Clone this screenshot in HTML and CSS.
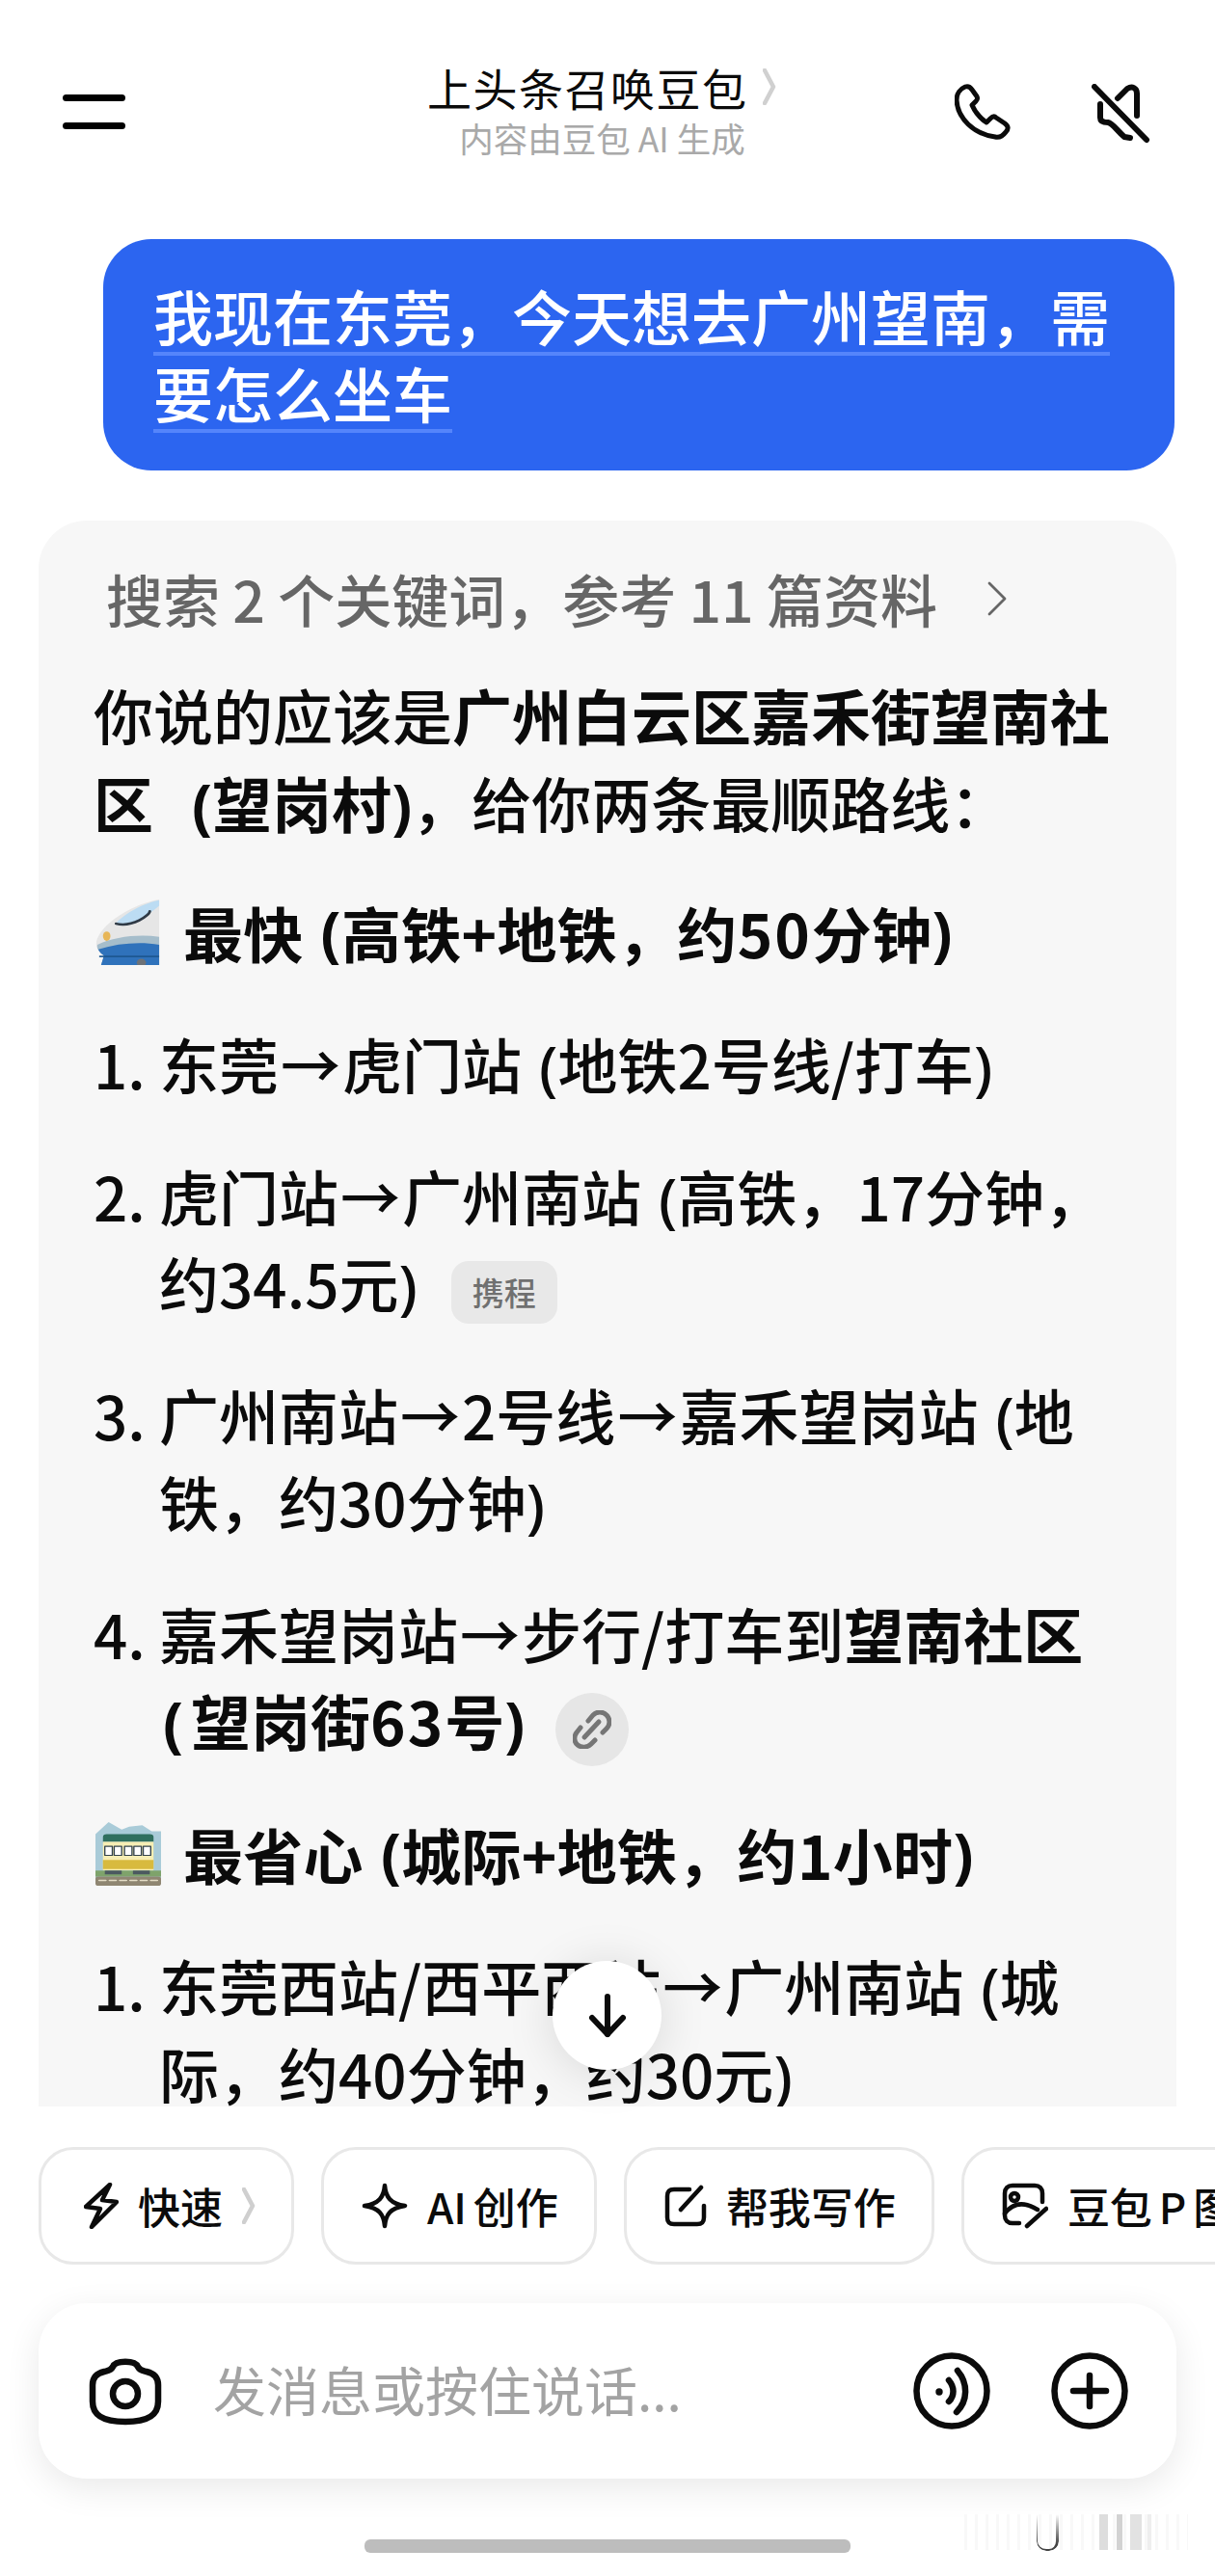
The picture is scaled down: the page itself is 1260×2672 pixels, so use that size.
FILE: index.html
```html
<!DOCTYPE html>
<html lang="zh-CN">

<head>
    <meta charset="UTF-8">
    <meta name="viewport" content="width=device-width, initial-scale=1.0">
    <title>上头条召唤豆包</title>
    <link rel="stylesheet" href="styles.css">
</head>

<body>

    <header class="top">
        <div class="menu"><span></span><span></span></div>
        <div class="title">
            <div class="title-main">上头条召唤豆包<svg class="title-arrow" viewBox="0 0 14 38"><path d="M2 2 L11 19 L2 36" /></svg></div>
            <div class="title-sub">内容由豆包 AI 生成</div>
        </div>
        <div class="top-icons">
            <svg class="ic-phone" viewBox="0 0 58 58"><path d="M11 3 C14 2 16 3 18 6 L23 13 C24 15 24 16 22 18 L18 22 C22 31 27 36 33 40 L37 36 C39 34 41 33 43 35 L52 41 C56 44 56 47 53 50 C50 54 46 56 42 55 C20 52 3 36 2 17 C2 10 6 5 11 3 Z" /></svg>
            <svg class="ic-mute" viewBox="0 0 62 62"><path d="M3 3 L57 58" /><path d="M27 15 L37 5 C42 2 47 4 47 10 V33" /><path d="M9 21 V35 Q9 40 17 40 C22 41 26 48 34 55 L40 56" /></svg>
        </div>
    </header>

    <div class="ask">
        <span class="ask-line">我现在东莞，今天想去广州望南，需</span>
        <span class="ask-line">要怎么坐车</span>
    </div>

    <main class="answer">
        <div class="search">搜索 2 个关键词，参考 11 篇资料<svg viewBox="0 0 20 36"><path d="M2 2 L18 18 L2 34" /></svg></div>

        <p class="intro">你说的应该是<b>广州白云区嘉禾街望南社<br>区 <i class="lp lp-intro">(</i>望岗村<i class="rp">)</i></b>，给你两条最顺路线：</p>

        <h2 class="route">
            <svg class="emoji" viewBox="0 0 70 84" preserveAspectRatio="none">
                <path d="M68 0 V84 H6 L10 70 C2 66 -1 58 2 50 C10 28 40 6 68 0 Z" fill="#e6e6e6" />
                <path d="M68 1 C48 6 30 20 22 30 C38 36 56 20 68 8 Z" fill="#bcdcf3" />
                <path d="M22 31 C40 36 58 20 58 15" fill="none" stroke="#2f3a46" stroke-width="3" />
                <path d="M2 58 C20 48 46 44 68 48 V84 H6 L10 70 C4 68 1 63 2 58 Z" fill="#a5bdcb" />
                <path d="M3 64 C24 56 48 54 68 58 V84 H6 L9 72 C6 70 4 67 3 64 Z" fill="#2f72bb" />
                <rect x="4" y="72" width="64" height="2" fill="#1c568f" />
                <circle cx="49" cy="81" r="5" fill="#6d7278" />
                <ellipse cx="12" cy="47" rx="4" ry="6" fill="#e7b658" />
            </svg>
            最快<i class="lp">(</i>高铁+地铁，约<span class="wide">50</span>分钟<i class="rp">)</i>
        </h2>

        <div class="step"><span class="num">1.</span><p>东莞<i class="to">→</i>虎门站<i class="lp">(</i>地铁2号线/打车<i class="rp">)</i></p></div>
        <div class="step"><span class="num">2.</span><p>虎门站<i class="to">→</i>广州南站<i class="lp">(</i>高铁，17分钟，<br>约34.5元<i class="rp">)</i><span class="tag">携程</span></p></div>
        <div class="step"><span class="num">3.</span><p>广州南站<i class="to">→</i>2号线<i class="to">→</i>嘉禾望岗站<i class="lp">(</i>地<br>铁，约30分钟<i class="rp">)</i></p></div>
        <div class="step"><span class="num">4.</span><p>嘉禾望岗站<i class="to">→</i>步行/打车到<b>望南社区<br><i class="lp lp-first">(</i>望岗街<span class="wide">63</span>号<i class="rp">)</i></b><span class="link"><svg viewBox="0 0 40 40"><path d="M16 11 L21 5 C25 1 31 1 35 5 C39 9 39 15 35 19 L31 23" /><path d="M8 18 L4 23 C1 27 1 33 5 36 C9 39 15 39 19 35 L23 31" /><path d="M12 28 L27 12" /></svg></span></p></div>

        <h2 class="route">
            <svg class="emoji emoji-b" viewBox="0 0 70 84" preserveAspectRatio="none">
                <path d="M0 16 L14 0 L28 10 L36 6 L50 4 L60 12 L70 12 V76 H0 Z" fill="#a9cbd8" />
                <path d="M8 20 Q8 16 12 16 H58 Q62 16 62 20 V26 H8 Z" fill="#2f6f5e" />
                <rect x="8" y="26" width="54" height="38" fill="#f6eeb4" />
                <rect x="8" y="50" width="54" height="12" fill="#d8ba3e" />
                <g fill="#fff" stroke="#33434d" stroke-width="1.4">
                    <rect x="10" y="32" width="8" height="12" />
                    <rect x="20" y="32" width="8" height="12" />
                    <rect x="31" y="32" width="8" height="12" />
                    <rect x="41" y="32" width="8" height="12" />
                    <rect x="51" y="32" width="8" height="12" />
                </g>
                <rect x="0" y="64" width="70" height="8" fill="#7ea36b" />
                <rect x="10" y="64" width="18" height="5" fill="#4c5a60" />
                <rect x="40" y="64" width="18" height="5" fill="#4c5a60" />
                <rect x="0" y="72" width="70" height="12" rx="3" fill="#8f8672" />
                <path d="M4 77 H66" stroke="#e4ddc6" stroke-width="2" stroke-dasharray="7 4" />
            </svg>
            最省心<i class="lp">(</i>城际+地铁，约1小时<i class="rp">)</i>
        </h2>

        <div class="step"><span class="num">1.</span><p>东莞西站/西平西站<i class="to">→</i>广州南站<i class="lp">(</i>城<br>际，约40分钟，约30元<i class="rp">)</i></p></div>
    </main>

    <button class="down"><svg viewBox="0 0 40 46"><path d="M20 3 V42" /><path d="M4 25 L20 42 L36 25" /></svg></button>

    <footer class="bottom">
        <div class="chips">
            <div class="chip">
                <svg class="ic-zap" viewBox="0 0 36 48"><path d="M27 2 L2 25 L17 27 L8 46 L34 20 L19 18 Z" /></svg>
                <span>快速</span>
                <svg class="chip-arrow" viewBox="0 0 14 38"><path d="M2 2 L11 19 L2 36" /></svg>
            </div>
            <div class="chip">
                <svg class="ic-star" viewBox="0 0 48 48"><path d="M24 3 C25 15 30 22 45 24 C30 26 25 33 24 45 C23 33 18 26 3 24 C18 22 23 15 24 3 Z" /></svg>
                <span class="chip-ai">AI 创作</span>
            </div>
            <div class="chip">
                <svg class="ic-edit" viewBox="0 0 44 44"><path d="M26 5 H10 C5 5 3 7 3 12 V34 C3 39 5 41 10 41 H34 C39 41 41 39 41 34 V22" /><path d="M17 26 L38 3" /></svg>
                <span>帮我写作</span>
            </div>
            <div class="chip">
                <svg class="ic-pic" viewBox="0 0 48 48"><path d="M18 42 H11 C6 42 3 39 3 34 V11 C3 6 6 3 11 3 H34 C39 3 42 6 42 11 V20" /><circle cx="13" cy="15" r="4" /><path d="M3 32 C12 20 24 20 37 28" /><path d="M26 45 L46 27" /></svg>
                <span class="chip-ai">豆包 P 图</span>
            </div>
        </div>

        <div class="inputbox">
            <svg class="ic-cam" viewBox="0 0 76 71"><path d="M25 10 C28 3 48 3 51 10 C53 14 56 14 60 15 C68 17 72 21 72 29 V46 C72 60 62 67 38 67 C14 67 4 60 4 46 V29 C4 21 8 17 16 15 C20 14 23 14 25 10 Z" /><circle cx="38" cy="38" r="13" /></svg>
            <span class="placeholder">发消息或按住说话...</span>
            <div class="input-right">
                <svg class="ic-round" viewBox="0 0 80 80"><circle cx="40" cy="40" r="36.5" /><path d="M46 19 C57 32 57 50 45 62" /><path d="M37 29 C43 36 43 45 37 51" /><circle class="dot" cx="27" cy="41" r="3.7" /></svg>
                <svg class="ic-round" viewBox="0 0 80 80"><circle cx="40" cy="40" r="36.5" /><path d="M40 24 V56" /><path d="M23 40 H57" /></svg>
            </div>
        </div>

        <div class="homebar"></div>
        <div class="mark"><span></span></div>
    </footer>

</body>

</html>
```

FILE: styles.css
```css
* {
    box-sizing: border-box;
}

html,
body {
    margin: 0;
    padding: 0;
}

body {
    position: relative;
    width: 1260px;
    height: 2672px;
    overflow: hidden;
    background: #fff;
    color: #0b0b0b;
    font-family: "Noto Sans CJK SC", "Noto Sans", sans-serif;
}

svg {
    fill: none;
    stroke: currentColor;
    stroke-linecap: round;
    stroke-linejoin: round;
    flex: none;
}

i {
    font-style: normal;
}

p {
    margin: 0;
}

/* header */
.top {
    display: flex;
    align-items: flex-start;
    height: 248px;
    padding: 63px 66px 0 65px;
}

.menu {
    display: flex;
    flex-direction: column;
    gap: 22px;
    width: 65px;
    margin-top: 35px;
}

.menu span {
    height: 7px;
    border-radius: 4px;
    background: #000;
}

.title {
    width: 363px;
    margin-left: 313px;
    text-align: center;
}

.title-main {
    display: flex;
    align-items: center;
    font-size: 46px;
    line-height: 54px;
    letter-spacing: 1.5px;
    white-space: nowrap;
}

.title-arrow {
    width: 14px;
    height: 38px;
    margin-left: 15px;
    stroke: #d0d0d0;
    stroke-width: 4.5;
}

.title-sub {
    margin-top: 5px;
    font-size: 35.5px;
    line-height: 42px;
    color: #a9a9a9;
    white-space: nowrap;
}

.top-icons {
    display: flex;
    gap: 84px;
    margin-left: auto;
    margin-top: 24px;
}

.ic-phone {
    width: 58px;
    height: 58px;
    stroke-width: 5;
}

.ic-mute {
    width: 62px;
    height: 62px;
    stroke-width: 6;
}

/* question */
.ask {
    width: 1111px;
    height: 240px;
    margin-left: 107px;
    padding: 44px 0 0 52px;
    border-radius: 50px;
    background: #2c65f0;
    color: #fff;
    font-size: 62px;
    font-weight: 500;
}

.ask-line {
    display: block;
    width: fit-content;
    height: 80px;
    line-height: 71px;
    background: linear-gradient(#5585fb, #5585fb) 0 73px / 100% 4px no-repeat;
}

/* answer card */
.answer {
    height: 1645px;
    margin: 52px 40px 0;
    padding: 46px 0 0 57px;
    overflow: hidden;
    border-radius: 50px 50px 0 0;
    background: #f7f7f7;
    font-size: 62px;
    font-weight: 500;
    line-height: 90.5px;
}

.search {
    display: flex;
    align-items: center;
    height: 70px;
    margin-left: 13px;
    font-size: 59px;
    color: #666;
}

.search svg {
    width: 20px;
    height: 36px;
    margin-left: 52px;
    stroke-width: 2.8;
    stroke: #666;
}

.intro {
    margin-top: 40px;
}

b,
.route {
    font-weight: 700;
}

.route {
    display: flex;
    align-items: center;
    height: 90px;
    margin: 45px 0 46px;
    font-size: 62px;
    line-height: 90px;
    letter-spacing: 0.3px;
    white-space: nowrap;
}

.emoji {
    width: 68px;
    height: 68px;
    margin: 0 23px 0 2px;
    stroke: none;
}

.emoji-b {
    height: 66px;
}

.step {
    display: flex;
    margin-bottom: 46px;
}

.num {
    width: 68px;
    flex: none;
}

.lp,
.rp {
    font-family: "Noto Sans", sans-serif;
    line-height: 1;
}

.lp {
    margin-left: 18px;
}

.lp-intro {
    margin-left: 26px;
}

.lp-first {
    margin: 0 8px 0 4px;
}

.wide {
    letter-spacing: 2px;
}

.to {
    margin: 0 2px;
}

.tag {
    display: inline-block;
    width: 110px;
    height: 65px;
    margin-left: 35px;
    border-radius: 18px;
    background: #e8e8e8;
    color: #707070;
    font-size: 33px;
    line-height: 65px;
    text-align: center;
    vertical-align: middle;
}

.link {
    display: inline-flex;
    align-items: center;
    justify-content: center;
    width: 76px;
    height: 76px;
    margin-left: 32px;
    border-radius: 50%;
    background: #e6e6e6;
    color: #757575;
    vertical-align: middle;
}

.link svg {
    width: 40px;
    height: 40px;
    stroke-width: 5;
}

/* scroll down button, sits over the text */
.down {
    position: absolute;
    left: 573px;
    top: 2034px;
    display: flex;
    align-items: center;
    justify-content: center;
    width: 113px;
    height: 113px;
    padding: 0;
    border: 0;
    border-radius: 50%;
    background: #fff;
    box-shadow: 0 4px 50px rgba(0, 0, 0, 0.13);
    color: #0b0b0b;
}

.down svg {
    width: 40px;
    height: 46px;
    stroke-width: 6;
}

/* bottom bar */
.bottom {
    height: 487px;
    padding-top: 42px;
    background: #fff;
}

.chips {
    display: flex;
    gap: 28px;
    padding-left: 40px;
    overflow: hidden;
    white-space: nowrap;
}

.chip {
    display: flex;
    align-items: center;
    flex: none;
    height: 122px;
    padding: 0 37px 0 39px;
    border: 3px solid #e8e8e8;
    border-radius: 36px;
    font-size: 44px;
    font-weight: 500;
}

.chip svg {
    margin-right: 20px;
    stroke-width: 4.5;
}

.ic-zap {
    width: 36px;
    height: 48px;
    margin-left: 5px;
}

.ic-star {
    width: 48px;
    height: 48px;
}

.ic-edit {
    width: 44px;
    height: 44px;
}

.ic-pic {
    width: 48px;
    height: 48px;
}

.chip-ai {
    word-spacing: -3px;
}

.chip svg.chip-arrow {
    width: 14px;
    height: 38px;
    margin: 0 0 0 20px;
    stroke: #cfcfcf;
    stroke-width: 4.5;
}

.inputbox {
    display: flex;
    align-items: center;
    width: 1180px;
    height: 182px;
    margin: 40px 0 0 40px;
    padding: 0 50px 0 52px;
    border-radius: 50px;
    background: #fff;
    box-shadow: 0 10px 36px rgba(0, 0, 0, 0.09);
}

.ic-cam {
    width: 76px;
    height: 71px;
    stroke-width: 6.5;
}

.placeholder {
    margin: 0 0 6px 53px;
    font-size: 55px;
    color: #a3a3a3;
}

.input-right {
    display: flex;
    gap: 63px;
    margin-left: auto;
}

.ic-round {
    width: 80px;
    height: 80px;
    stroke-width: 6.5;
}

.ic-round .dot {
    fill: currentColor;
    stroke: none;
}

.homebar {
    width: 504px;
    height: 14px;
    margin: 63px 0 0 378px;
    border-radius: 6px;
    background: #bdbdbd;
}

/* faint watermark bottom right */
.mark {
    position: absolute;
    left: 1000px;
    top: 2608px;
    width: 232px;
    height: 37px;
    background:
        linear-gradient(90deg, transparent 0 140px, #ddd 140px 149px, transparent 149px 158px, #d2d2d2 158px 164px, transparent 164px 172px, #e2e2e2 172px 184px, transparent 184px 190px, #eee 190px 194px, transparent 194px),
        repeating-linear-gradient(90deg, #f8f8f8 0 3px, #fff 3px 11px);
}

.mark span {
    position: absolute;
    left: 75px;
    top: 0;
    width: 23px;
    height: 38px;
    border: solid #444;
    border-width: 0 3px 2px 1px;
    border-radius: 0 0 10px 10px;
    -webkit-mask-image: linear-gradient(transparent, #000 80%);
    mask-image: linear-gradient(transparent, #000 80%);
}
```
